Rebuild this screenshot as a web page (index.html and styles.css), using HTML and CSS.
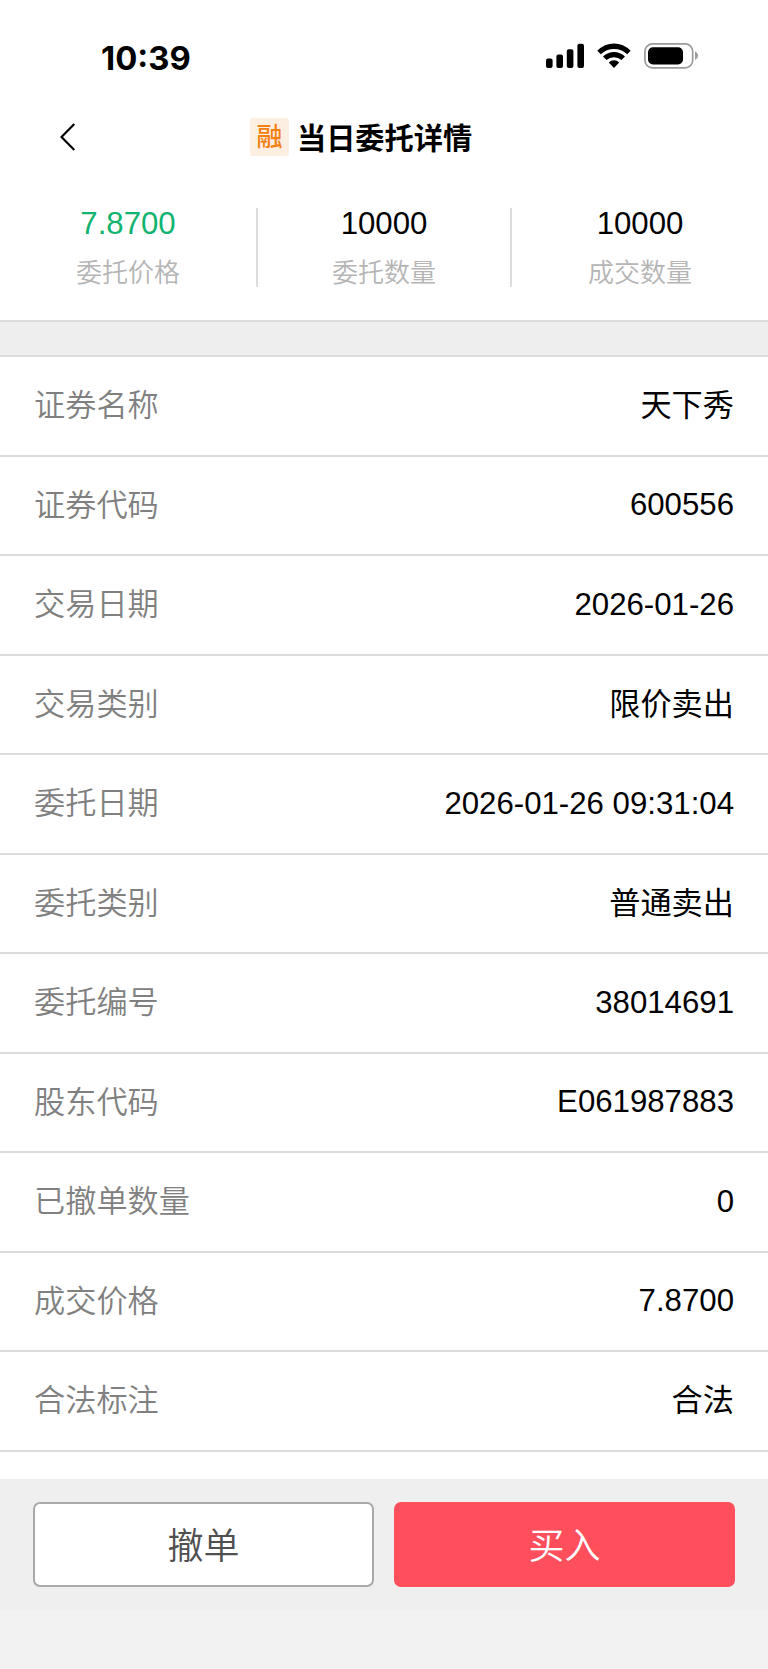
FILE: index.html
```html
<!DOCTYPE html>
<html lang="zh-CN">
<head>
  <meta charset="UTF-8">
  <meta name="viewport" content="width=device-width, initial-scale=1.0">
  <title>当日委托详情</title>
  <link rel="stylesheet" href="styles.css">
</head>
<body>

  <!-- Status bar -->
  <div class="status-bar">
    <span class="time">10:39</span>
    <div class="status-icons">
      <svg class="signal" width="39" height="26" viewBox="0 0 39 26">
        <rect x="0" y="15.5" width="6.6" height="9.5" rx="2"/>
        <rect x="10.4" y="11.5" width="6.6" height="13.5" rx="2"/>
        <rect x="20.8" y="6.2" width="6.6" height="18.8" rx="2"/>
        <rect x="31.4" y="0.7" width="6.6" height="24.3" rx="2"/>
      </svg>
      <svg class="wifi" width="34" height="26" viewBox="0 0 34 26">
        <path d="M0.3 7.8Q7.6 0.6 17 0.6T33.7 7.8L30.2 11.3Q24.6 5.9 17 5.9T3.8 11.3Z"/>
        <path d="M6 13.6Q10.8 9.1 17 9.1T28 13.6L24.5 17.1Q21.3 14.2 17 14.2T9.5 17.1Z"/>
        <path d="M11.8 19.4Q14 17.2 17 17.2T22.2 19.4L17 25Z"/>
      </svg>
      <svg class="battery" width="55" height="26" viewBox="0 0 55 26">
        <rect x="0.9" y="0.9" width="47.8" height="24" rx="7.6" fill="none" stroke="#9b9b9b" stroke-width="1.7"/>
        <rect x="4" y="4.2" width="35" height="17.2" rx="5"/>
        <path d="M51 8.5Q54 9.8 54 12.7T51 17Z" fill="#9b9b9b"/>
      </svg>
    </div>
  </div>

  <!-- Title -->
  <div class="header">
    <svg class="back" width="16" height="28" viewBox="0 0 16 28">
      <path d="M14.3 1L1.5 14L14.3 27" fill="none" stroke="#000" stroke-width="2.2"/>
    </svg>
    <div class="title">
      <span class="tag">融</span>
      <h1>当日委托详情</h1>
    </div>
  </div>

  <div class="summary">
    <div class="summary-item">
      <span class="summary-value green">7.8700</span>
      <span class="summary-label">委托价格</span>
    </div>
    <div class="summary-item">
      <span class="summary-value">10000</span>
      <span class="summary-label">委托数量</span>
    </div>
    <div class="summary-item">
      <span class="summary-value">10000</span>
      <span class="summary-label">成交数量</span>
    </div>
  </div>

  <div class="divider"></div>

  <!-- Order details -->
  <div class="details">
    <div class="row"><span class="label">证券名称</span><span class="text">天下秀</span></div>
    <div class="row"><span class="label">证券代码</span><span>600556</span></div>
    <div class="row"><span class="label">交易日期</span><span>2026-01-26</span></div>
    <div class="row"><span class="label">交易类别</span><span class="text">限价卖出</span></div>
    <div class="row"><span class="label">委托日期</span><span>2026-01-26 09:31:04</span></div>
    <div class="row"><span class="label">委托类别</span><span class="text">普通卖出</span></div>
    <div class="row"><span class="label">委托编号</span><span>38014691</span></div>
    <div class="row"><span class="label">股东代码</span><span>E061987883</span></div>
    <div class="row"><span class="label">已撤单数量</span><span>0</span></div>
    <div class="row"><span class="label">成交价格</span><span>7.8700</span></div>
    <div class="row"><span class="label">合法标注</span><span class="text">合法</span></div>
  </div>

  <div class="button-container">
    <button class="cancel">撤单</button>
    <button class="buy">买入</button>
  </div>

</body>
</html>
```
FILE: styles.css
```css
* {
  box-sizing: border-box;
}

body {
  font-family: "Liberation Sans", "Noto Sans CJK SC", sans-serif;
  background-color: #f2f2f2;
  color: #000;
  margin: 0;
  height: 1669px;
  overflow: hidden;
  display: flex;
  flex-direction: column;
}

.status-bar {
  height: 100px;
  flex: none;
  padding: 15px 69px 0 101px;
  display: flex;
  justify-content: space-between;
  align-items: center;
  background-color: #fff;
}

.time {
  font-family: Inter, sans-serif;
  font-size: 32.8px;
  font-weight: 700;
  line-height: 40px;
}

.status-icons {
  display: flex;
  margin-top: -3px;
}

.signal {
  margin-right: 12px;
}

.wifi {
  margin-right: 13px;
}

.header {
  height: 74px;
  flex: none;
  padding-left: 60px;
  display: flex;
  align-items: center;
  background-color: #fff;
}

.title {
  margin-left: 174px;
  display: flex;
  align-items: center;
}

.tag {
  width: 39px;
  height: 38px;
  margin-right: 8px;
  border-radius: 3px;
  background-color: #fdeee2;
  color: #f5800f;
  font-size: 26px;
  font-weight: 500;
  line-height: 38px;
  text-align: center;
}

h1 {
  margin: 3px 0 0;
  font-size: 29.2px;
  line-height: 40px;
  font-weight: 700;
}

.summary {
  height: 146px;
  flex: none;
  padding-top: 34px;
  display: grid;
  grid-template-columns: 256px 254px 258px;
  background-color: #fff;
}

.summary-item {
  height: 79px;
  display: flex;
  flex-direction: column;
  align-items: center;
}

.summary-item + .summary-item {
  border-left: 2px solid #dcdcdc;
}

.summary-value {
  font-size: 31.2px;
  line-height: 32px;
}

.summary-label {
  margin-top: 13px;
  font-size: 26px;
  line-height: 40px;
  font-weight: 350;
  color: #b5b5b5;
}

.green {
  color: #10b36f;
}

.divider {
  height: 37px;
  flex: none;
  background-color: #eee;
  border-top: 2px solid #dcdcdc;
  border-bottom: 2px solid #dcdcdc;
}

.details {
  height: 1122px;
  flex: none;
  background-color: #fff;
}

.row {
  height: 99.5px;
  padding: 0 34px;
  display: flex;
  justify-content: space-between;
  align-items: center;
  border-bottom: 2px solid #dcdcdc;
  font-size: 31.2px;
  line-height: 40px;
}

.label,
.text {
  padding-top: 1px;
}

.label {
  font-weight: 350;
  color: #808080;
}

.button-container {
  height: 131px;
  flex: none;
  padding: 23px 33px 0 33px;
  display: grid;
  grid-template-columns: 1fr 1fr;
  gap: 20px;
  background-color: #efefef;
}

button {
  height: 85px;
  padding: 0 0 4px;
  border: none;
  border-radius: 7px;
  font-family: inherit;
  font-size: 36px;
  font-weight: 350;
}

.cancel {
  background-color: #fff;
  border: 2px solid #a9a9a9;
  color: #505050;
}

.buy {
  background-color: #ff4e5c;
  color: #fff;
}
```
